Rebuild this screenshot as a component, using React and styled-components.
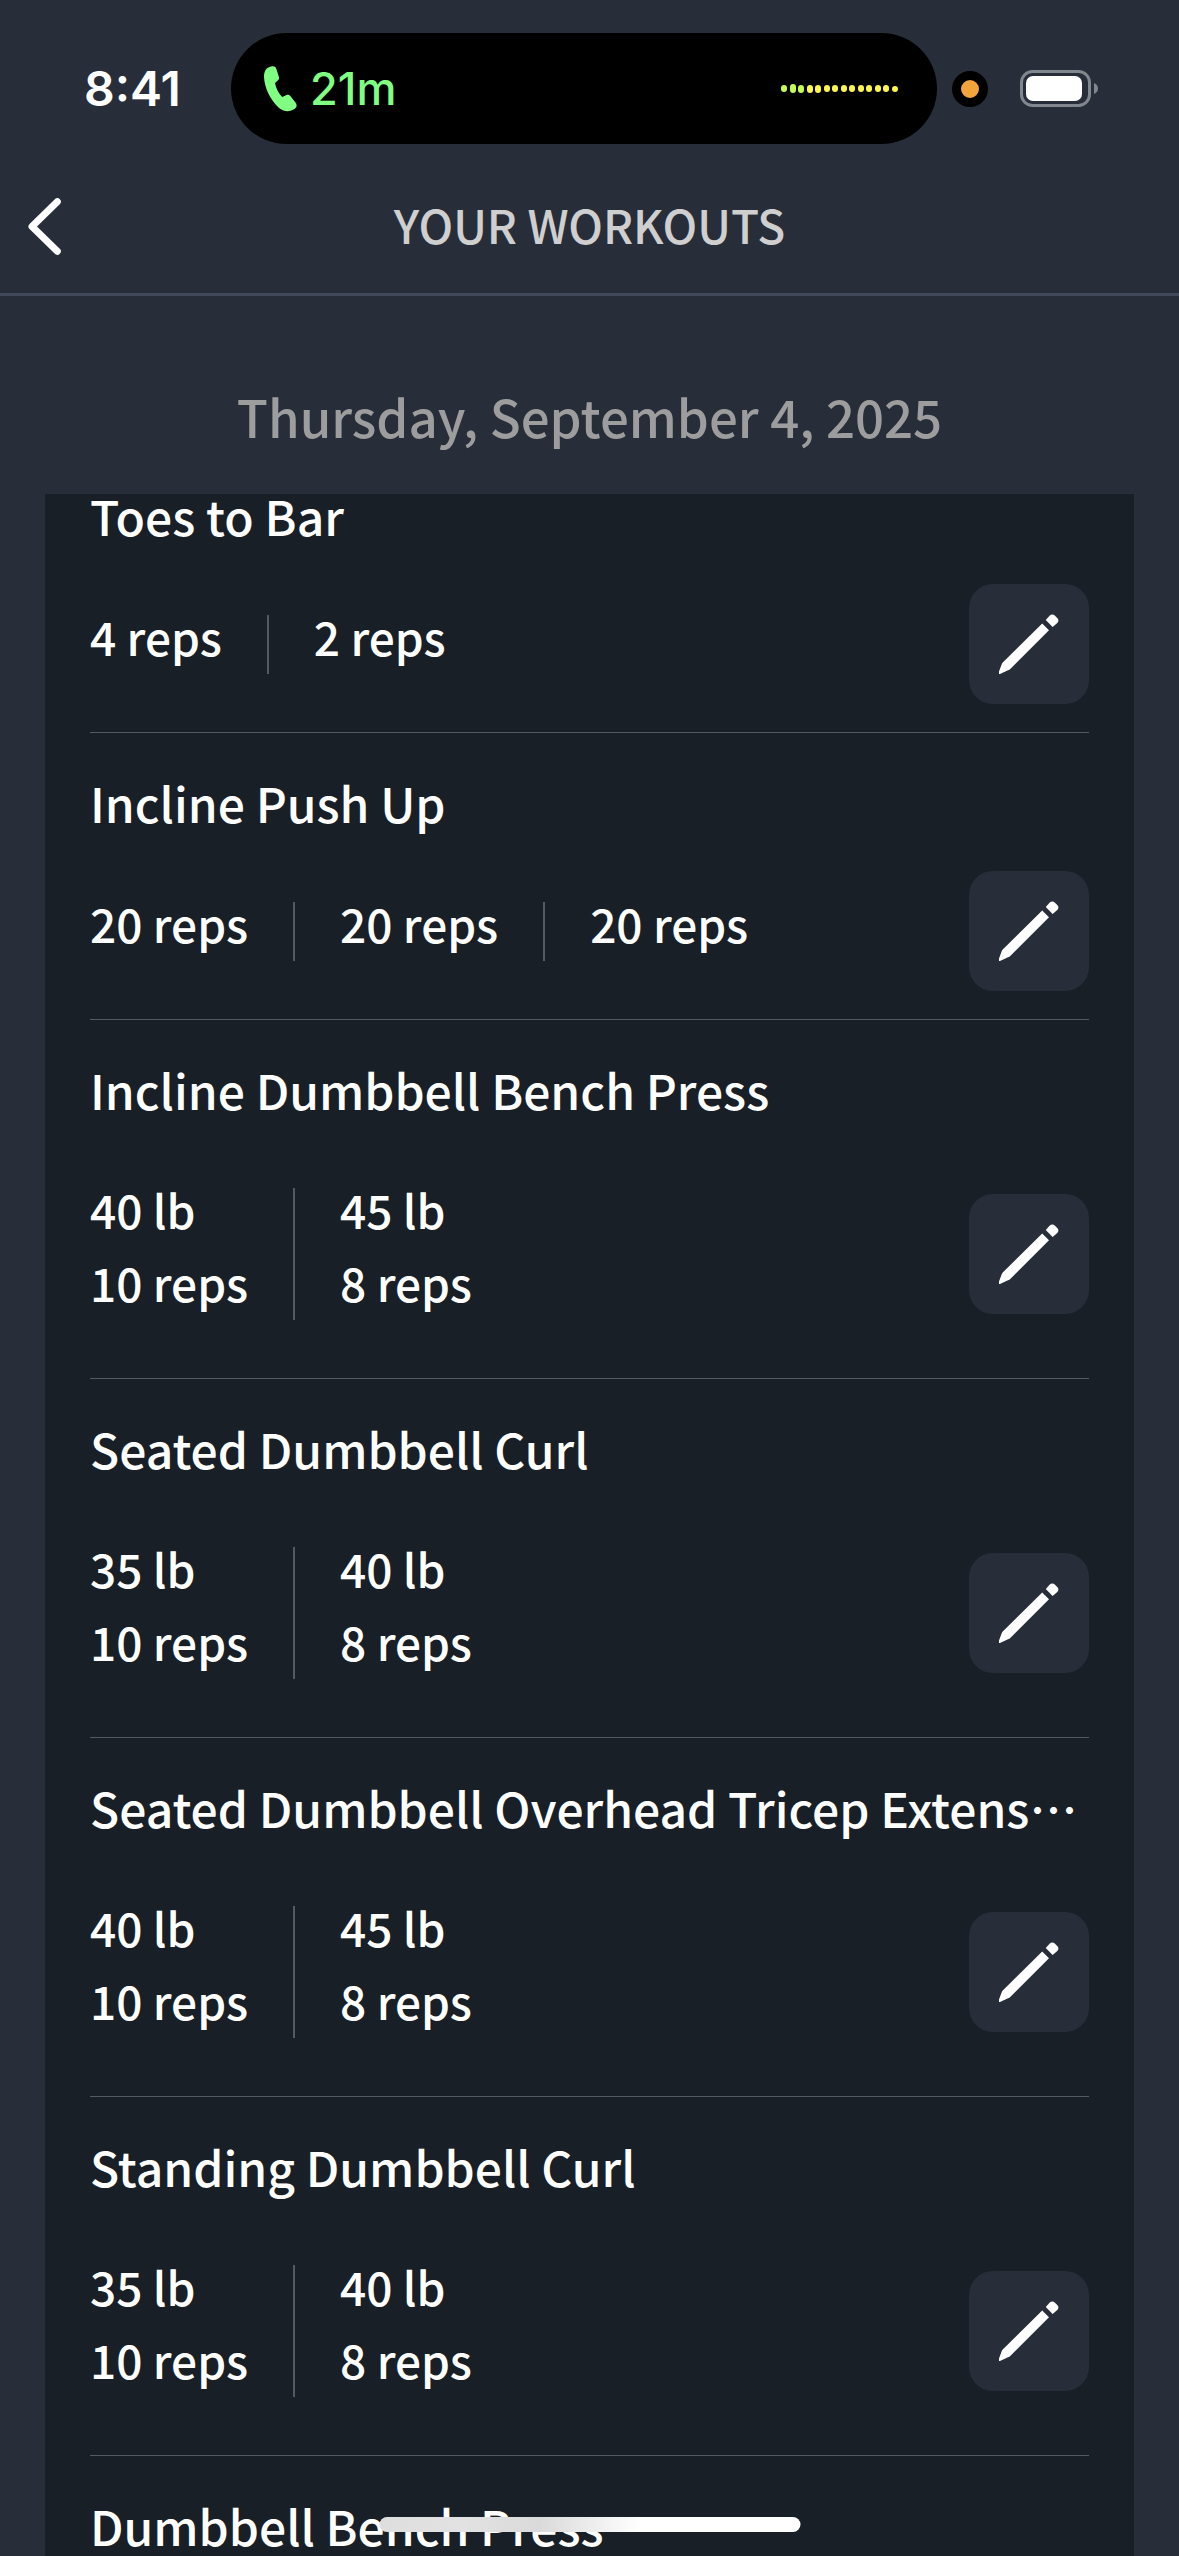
import styled, { createGlobalStyle } from 'styled-components';
import { useLayoutEffect, useRef } from 'react';

const exercises = [
    { name: 'Toes to Bar', sets: [['4 reps'], ['2 reps']] },
    { name: 'Incline Push Up', sets: [['20 reps'], ['20 reps'], ['20 reps']] },
    { name: 'Incline Dumbbell Bench Press', sets: [['40 lb', '10 reps'], ['45 lb', '8 reps']] },
    { name: 'Seated Dumbbell Curl', sets: [['35 lb', '10 reps'], ['40 lb', '8 reps']] },
    { name: 'Seated Dumbbell Overhead Tricep Extension', sets: [['40 lb', '10 reps'], ['45 lb', '8 reps']] },
    { name: 'Standing Dumbbell Curl', sets: [['35 lb', '10 reps'], ['40 lb', '8 reps']] },
    { name: 'Dumbbell Bench Press', sets: [] },
];

const levels = [7, 9, 8, 8, 8, 7, 7, 7, 7, 7, 7, 7, 7, 6];

function IconPhone(){
    return (
        <svg width="33" height="46" viewBox="0 0 33 46" fill="#80ff83" aria-hidden="true">
            <path d="M8 0.3C10.500 0 11.800 1 12.400 3L15 11.300C15.200 12.800 14.900 13.500 14 14.200L11 17C11.800 22 14.500 27.500 18.200 31L22 29.300C23.800 28.500 25.300 28.700 26.300 30L31.500 36.500C33.200 39 33 41 30.700 42.800C25.500 46.700 19 45.500 14.500 41.500C6 33.500 0.500 21.500 0 11C0 5 2.500 1 8 0.300Z"/>
        </svg>
    )
}

function IconBattery(){
    return (
        <svg width="78" height="37" viewBox="0 0 78 37" aria-hidden="true">
            <rect x="1.500" y="1.500" width="68" height="34" rx="11" fill="none" stroke="#82868d" strokeWidth="3"/>
            <rect x="6" y="6" width="56" height="25" rx="7" fill="#fff"/>
            <path d="M74 13C79.300 15 79.300 22 74 24Z" fill="#82868d"/>
        </svg>
    )
}

function IconBack(){
    return (
        <svg width="33" height="57" viewBox="0 0 33 57" fill="none" stroke="#fff" strokeWidth="7" strokeLinecap="round" strokeLinejoin="round" aria-hidden="true">
            <path d="M29.300 3.700L4 28.500L29.300 53.300"/>
        </svg>
    )
}

function IconPencil(){
    return (
        <svg width="60" height="60" viewBox="0 0 60 60" fill="#fff" aria-hidden="true">
            <path d="M43.200 9.500L50 16.200L11.500 54.800Q10.500 55.800 9 56.300L1.500 59.800Q-1 60.500 -0.300 58.300L2.600 50.500Q3 49 4 48.200Z"/>
            <path d="M46.800 6L50.500 1.800Q53.300 -1 56 1.800L58 3.800Q60.800 6.500 58 9.300L53.600 13Z"/>
        </svg>
    )
}

function Exercise({exercise}){
    return (
        <Row>
            <Name>{exercise.name}</Name>
            {exercise.sets.length > 0 &&
                <Details>
                    <Sets>
                        {exercise.sets.map((lines, i) => (
                            <Set key={i}>
                                {lines.map((line) => <span key={line}>{line}</span>)}
                            </Set>
                        ))}
                    </Sets>
                    <EditButton type="button" aria-label={'Edit ' + exercise.name}>
                        <IconPencil/>
                    </EditButton>
                </Details>
            }
        </Row>
    )
}

function App(){
    const list = useRef(null);

    useLayoutEffect(() => {
        // open slightly scrolled into the list
        list.current.scrollTop = 48;
    }, []);

    return (
        <Screen>
            <GlobalStyle/>
            <StatusBar>
                <Time>8:41</Time>
                <Island>
                    <IconPhone/>
                    <Duration>21m</Duration>
                    <Levels>
                        {levels.map((level, i) => <Level key={i} $level={level} $green={i < 3}/>)}
                    </Levels>
                </Island>
                <MicDot/>
                <IconBattery/>
            </StatusBar>
            <Header>
                <BackButton type="button" aria-label="Back"><IconBack/></BackButton>
                <Title>YOUR WORKOUTS</Title>
            </Header>
            <DateHeading>Thursday, September 4, 2025</DateHeading>
            <List ref={list}>
                {exercises.map((exercise) => <Exercise key={exercise.name} exercise={exercise}/>)}
            </List>
            <HomeIndicator/>
        </Screen>
    )
}

const GlobalStyle = createGlobalStyle`
    * {
        box-sizing: border-box;
    }

    body {
        margin: 0;
        background-color: #282e39;
    }

    button {
        border: 0;
        padding: 0;
        cursor: pointer;
    }
`;
const Screen = styled.div`
    display: flex;
    flex-direction: column;

    height: 100vh;

    background-color: #282e39;
    color: #fff;
    font-family: "Noto Sans CJK KR", "Noto Sans", sans-serif;
    font-weight: 500;
`;
const StatusBar = styled.div`
    display: flex;
    align-items: center;
    flex-shrink: 0;

    padding: 33px 81px 16px 84px;

    font-family: Inter, sans-serif;
`;
const Time = styled.div`
    width: 147px;

    font-size: 48px;
    font-weight: 600;
    line-height: 60px;
`;
const Island = styled.div`
    display: flex;
    align-items: center;
    flex: 1;

    height: 111px;
    border-radius: 56px;
    padding: 0 39px 0 33px;

    background-color: #000;
`;
const Duration = styled.div`
    margin-left: 13px;

    color: #80ff83;
    font-size: 45px;
    font-weight: 500;
    line-height: 60px;
`;
const Levels = styled.div`
    display: flex;
    align-items: center;
    justify-content: space-between;

    width: 117px;
    margin-left: auto;
`;
const Level = styled.span`
    width: 6px;
    height: ${props => props.$level}px;
    border-radius: 3px;

    background-color: ${props => props.$green ? '#c4fb55' : '#fdf64f'};
`;
const MicDot = styled.div`
    width: 36px;
    height: 36px;
    margin: 0 32px 0 15px;
    border: 9px solid #000;
    border-radius: 50%;

    background-color: #f2a33c;
`;
const Header = styled.header`
    display: grid;
    grid-template-columns: 90px 1fr 90px;
    align-items: center;
    flex-shrink: 0;

    height: 136px;
    border-bottom: 3px solid #3f495a;
`;
const BackButton = styled.button`
    display: flex;
    align-items: center;

    height: 90px;
    padding-left: 28px;

    background: none;
`;
const Title = styled.h1`
    margin: 0;
    padding-bottom: 6px;

    color: #cfcfcf;
    font-size: 46px;
    font-weight: 500;
    line-height: 60px;
    text-align: center;
`;
const DateHeading = styled.h2`
    flex-shrink: 0;

    margin: 0;
    padding: 80px 45px 38px;

    color: #9d9d9d;
    font-size: 51px;
    font-weight: 500;
    line-height: 80px;
    text-align: center;
`;
const List = styled.main`
    flex: 1;

    min-height: 0;
    margin: 0 45px;
    padding: 0 45px;

    background-color: #191f26;

    overflow-y: auto;
    scrollbar-width: none;
`;
const Row = styled.section`
    padding-bottom: 28px;
    border-bottom: 1px solid #565a60;

    &:last-child {
        border-bottom: 0;
    }
`;
const Name = styled.h3`
    margin: 0;
    padding: 39px 0;

    font-size: 48px;
    font-weight: 500;
    line-height: 60px;

    overflow: hidden;
    text-overflow: ellipsis;
    white-space: nowrap;
`;
const Details = styled.div`
    display: flex;
    align-items: center;
    justify-content: space-between;
`;
const Sets = styled.div`
    display: flex;

    padding: 30px 0;
`;
const Set = styled.div`
    display: flex;
    flex-direction: column;
    gap: 31px;

    padding: 0 45px 17px 0;

    font-size: 46px;
    line-height: 42px;

    & + & {
        padding-left: 45px;
        border-left: 2px solid #565a60;
    }
`;
const EditButton = styled.button`
    display: flex;
    align-items: center;
    justify-content: center;

    width: 120px;
    height: 120px;
    border-radius: 24px;

    background-color: #282e39;
`;
const HomeIndicator = styled.div`
    position: fixed;
    bottom: 24px;
    left: 50%;

    width: 421px;
    height: 15px;
    border-radius: 8px;

    background: linear-gradient(90deg, #dedede 0%, #e2e2e2 20%, #dadada 38%, #fff 62%);
    transform: translateX(-50%);
`;

export default App;
